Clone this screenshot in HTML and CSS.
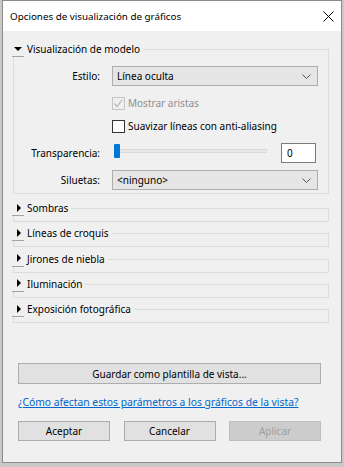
FILE: index.html
```html
<!DOCTYPE html>
<html lang="es">
<head>
    <meta charset="UTF-8">
    <meta name="viewport" content="width=device-width, initial-scale=1.0">
    <title>Opciones de visualización de gráficos</title>
    <link rel="stylesheet" href="styles.css">
</head>
<body>
    <div class="dialog">
        <div class="titlebar">
            <span class="title">Opciones de visualización de gráficos</span>
            <span class="close">
                <svg width="11" height="11" viewBox="0 0 11 11"><path d="M0.5 0.5 L10.5 10.5 M10.5 0.5 L0.5 10.5" stroke="#000" stroke-width="1" fill="none"/></svg>
            </span>
        </div>

        <div class="content">
            <div class="group">
                <div class="group-head">
                    <span class="toggle"><span class="tri-down"></span></span>
                    <span class="group-title">Visualización de modelo</span>
                    <span class="rule"></span>
                </div>
                <div class="group-body open">
                    <div class="row row-estilo">
                        <span class="lbl">Estilo:</span>
                        <div class="combo">
                            <span>Línea oculta</span>
                            <svg class="chev" width="9" height="5" viewBox="0 0 9 5"><polyline points="0.5,0.5 4.5,4.5 8.5,0.5" stroke="#555" fill="none"/></svg>
                        </div>
                    </div>
                    <div class="row row-check1">
                        <span class="lbl"></span>
                        <label class="check disabled">
                            <span class="box">
                                <svg width="11" height="11" viewBox="0 0 11 11"><polyline points="1.5,5.5 4,8.5 9.5,1.5" stroke="#b4b4b4" stroke-width="1.2" fill="none"/></svg>
                            </span>
                            Mostrar aristas
                        </label>
                    </div>
                    <div class="row row-check2">
                        <span class="lbl"></span>
                        <label class="check">
                            <span class="box"></span>
                            Suavizar líneas con anti-aliasing
                        </label>
                    </div>
                    <div class="row row-transp">
                        <span class="lbl">Transparencia:</span>
                        <div class="slider-line">
                            <div class="slider">
                                <span class="track"></span>
                                <span class="thumb"></span>
                            </div>
                            <div class="edit">0</div>
                        </div>
                    </div>
                    <div class="row row-silu">
                        <span class="lbl">Siluetas:</span>
                        <div class="combo">
                            <span>&lt;ninguno&gt;</span>
                            <svg class="chev" width="9" height="5" viewBox="0 0 9 5"><polyline points="0.5,0.5 4.5,4.5 8.5,0.5" stroke="#555" fill="none"/></svg>
                        </div>
                    </div>
                </div>
            </div>

            <div class="group closed">
                <div class="group-head">
                    <span class="toggle"><span class="tri-right"></span></span>
                    <span class="group-title">Sombras</span>
                    <span class="rule"></span>
                </div>
                <div class="group-body"></div>
            </div>
            <div class="group closed">
                <div class="group-head">
                    <span class="toggle"><span class="tri-right"></span></span>
                    <span class="group-title">Líneas de croquis</span>
                    <span class="rule"></span>
                </div>
                <div class="group-body"></div>
            </div>
            <div class="group closed">
                <div class="group-head">
                    <span class="toggle"><span class="tri-right"></span></span>
                    <span class="group-title">Jirones de niebla</span>
                    <span class="rule"></span>
                </div>
                <div class="group-body"></div>
            </div>
            <div class="group closed">
                <div class="group-head">
                    <span class="toggle"><span class="tri-right"></span></span>
                    <span class="group-title">Iluminación</span>
                    <span class="rule"></span>
                </div>
                <div class="group-body"></div>
            </div>
            <div class="group closed">
                <div class="group-head">
                    <span class="toggle"><span class="tri-right"></span></span>
                    <span class="group-title">Exposición fotográfica</span>
                    <span class="rule"></span>
                </div>
                <div class="group-body"></div>
            </div>

            <button class="btn btn-wide">Guardar como plantilla de vista...</button>
            <a class="help-link" href="#">¿Cómo afectan estos parámetros a los gráficos de la vista?</a>

            <div class="actions">
                <button class="btn">Aceptar</button>
                <button class="btn">Cancelar</button>
                <button class="btn" disabled>Aplicar</button>
            </div>
        </div>
    </div>
</body>
</html>
```

FILE: styles.css
```css
body {
    margin: 0;
    background: #c9c9c9;
    font-family: "Noto Sans", "Open Sans", sans-serif;
    font-size: 10px;
    color: #000;
}
.dialog {
    width: 338px;
    height: 461px;
    margin-left: 2px;
    border: 1px solid #8c8c8c;
    background: #f0f0f0;
    overflow: hidden;
}
.titlebar {
    height: 30px;
    background: #fff;
    display: flex;
    align-items: center;
    justify-content: space-between;
    padding: 0 7px;
}
.title {
    font-size: 9.8px;
}
.close {
    display: flex;
}
.content {
    padding: 10px 12px 0 10px;
}

/* group boxes */
.group-head {
    display: flex;
    height: 16px;
}
.toggle {
    width: 12px;
    height: 15px;
    border-bottom: 1px solid #a3a3a3;
    margin-left: -1px;
    display: flex;
    align-items: center;
    justify-content: center;
}
.tri-down {
    width: 0;
    height: 0;
    border-left: 4px solid transparent;
    border-right: 4px solid transparent;
    border-top: 4px solid #000;
}
.tri-right {
    width: 0;
    height: 0;
    border-top: 4px solid transparent;
    border-bottom: 4px solid transparent;
    border-left: 4px solid #000;
    margin-left: 1px;
}
.group-title {
    margin-left: 3px;
    padding-right: 3px;
    line-height: 16px;
}
.rule {
    flex: 1;
    margin-top: 8px;
    border-top: 1px solid #dcdcdc;
    border-right: 1px solid #dcdcdc;
}
.group-body {
    height: 5px;
    border: 1px solid #dcdcdc;
    border-top: none;
}
.group-body.open {
    height: auto;
    padding: 9px 10px 3px 0;
}
.group.closed {
    margin-top: 3.25px;
}
.group:first-child + .group {
    margin-top: 6px;
}

/* rows */
.row {
    display: grid;
    grid-template-columns: 86px 1fr;
    column-gap: 12px;
    align-items: center;
}
.lbl {
    text-align: right;
}
.row-estilo { height: 20px; }
.row-check1 { height: 14px; margin-top: 10px; }
.row-check2 { height: 14px; margin-top: 9px; }
.row-transp { height: 20px; margin-top: 10px; }
.row-silu { height: 20px; margin-top: 7px; }

.combo {
    height: 18px;
    border: 1px solid #adadad;
    background: #e5e5e5;
    display: flex;
    align-items: center;
    justify-content: space-between;
    padding: 0 6px 0 4px;
}
.check {
    display: flex;
    align-items: center;
    gap: 3px;
}
.box {
    width: 11px;
    height: 11px;
    border: 1px solid #333;
    background: #fff;
    display: flex;
}
.check.disabled {
    color: #8f8f8f;
}
.check.disabled .box {
    border-color: #c4c4c4;
    background: #f0f0f0;
}

.slider-line {
    display: flex;
    align-items: center;
    justify-content: space-between;
}
.slider {
    position: relative;
    width: 155px;
    height: 16px;
    display: flex;
    align-items: center;
    margin-top: -5px;
}
.track {
    margin-left: 4px;
    width: 150px;
    height: 2px;
    background: #e7e7e7;
    border: 1px solid #d9d9d9;
    border-radius: 1px;
}
.thumb {
    position: absolute;
    left: 2px;
    top: 1px;
    width: 6px;
    height: 14px;
    background: #0078d7;
    border-radius: 1px;
}
.edit {
    width: 28px;
    height: 18px;
    border: 1px solid #7a7a7a;
    background: #fff;
    line-height: 18px;
    padding-left: 5px;
    margin-right: 2px;
}

/* bottom buttons */
.btn {
    font-family: inherit;
    font-size: 10px;
    color: #000;
    background: #e1e1e1;
    border: 1px solid #adadad;
    height: 20px;
    width: 92px;
    padding: 0;
}
.btn[disabled] {
    background: #cccccc;
    border-color: #bfbfbf;
    color: #a0a0a0;
}
.btn-wide {
    display: block;
    width: 303px;
    height: 21px;
    margin: 40px 0 0 5px;
}
.help-link {
    display: block;
    margin: 11px 0 0 5px;
    line-height: 14px;
    font-size: 10.3px;
    color: #0066cc;
    text-decoration: underline;
}
.actions {
    display: flex;
    gap: 13.5px;
    margin: 12px 0 0 5px;
}
```
